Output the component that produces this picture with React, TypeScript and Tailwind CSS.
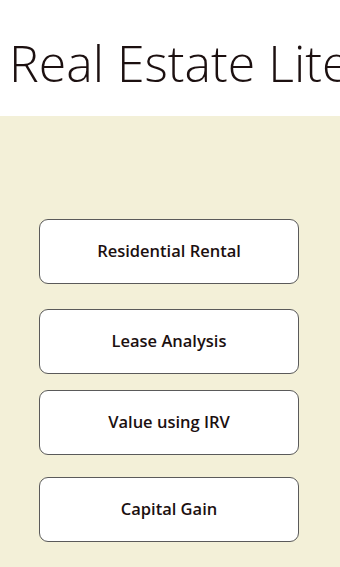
export default function App() {
  const items = [
    { label: 'Residential Rental', mt: 'mt-0' },
    { label: 'Lease Analysis', mt: 'mt-[25px]' },
    { label: 'Value using IRV', mt: 'mt-[16px]' },
    { label: 'Capital Gain', mt: 'mt-[22px]' },
  ];

  return (
    <div className="flex h-[567px] w-[340px] flex-col overflow-hidden bg-white font-['Open_Sans',sans-serif] text-[#1c1010]">
      <header className="h-[116px] shrink-0 overflow-hidden whitespace-nowrap pl-[9px] pt-[33px]">
        <h1 className="text-[50px] font-light leading-[60px]">Real Estate Lite</h1>
      </header>
      <main className="flex flex-1 flex-col bg-[#f3f0d8] pl-[39px] pt-[103px]">
        {items.map((item) => (
          <button
            key={item.label}
            className={`${item.mt} flex h-[65px] w-[260px] items-center justify-center rounded-[9px] border border-[#5a5a5a] bg-white text-[16.5px] font-semibold`}
          >
            {item.label}
          </button>
        ))}
      </main>
    </div>
  );
}
